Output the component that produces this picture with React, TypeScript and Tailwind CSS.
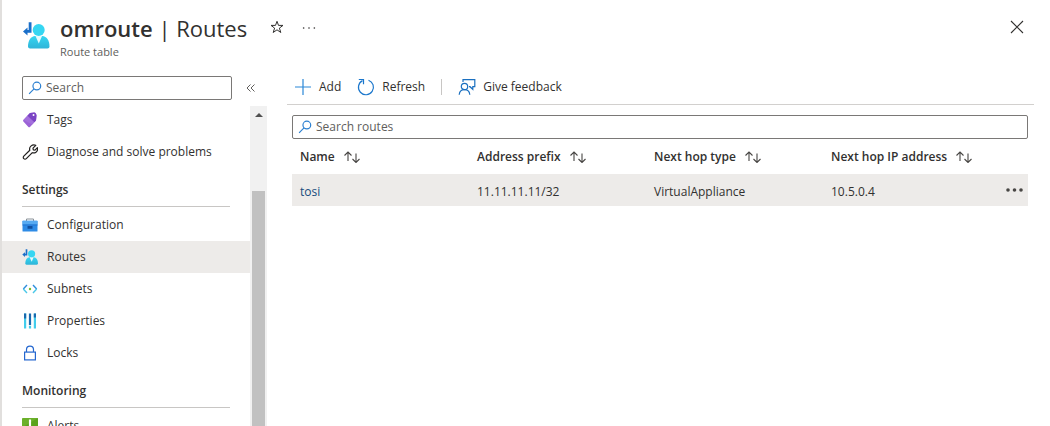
import React from "react";

type IconProps = { className?: string };

function RouteTableIcon({ className }: IconProps) {
  const id = React.useId();
  return (
    <svg viewBox="0 0 27 27" className={className} aria-hidden="true">
      <defs>
        <linearGradient id={id} x1="0" y1="0" x2="0" y2="1">
          <stop offset="0" stopColor="#35d6f2" />
          <stop offset="1" stopColor="#2fb4d8" />
        </linearGradient>
      </defs>
      <path d="M9 .3V10.800H5v2.700L.5 9.400 5 5.500v2.400h1.200V.3z" fill="#1a6fc9" />
      <path d="M5.500 24.500C5.500 18 8.500 14.500 12.500 14H20c4 .5 7 4 7 10.500 0 1.200-1 2-2 2H7.500c-1 0-2-.8-2-2z" fill={`url(#${id})`} />
      <path d="M13 14h6.600l-3.300 7.500z" fill="#e6fafd" />
      <circle cx="16.200" cy="8" r="6" fill="#35d6f2" />
    </svg>
  );
}

function SearchIcon({ className }: IconProps) {
  return (
    <svg viewBox="0 0 13 13" className={className} fill="none" stroke="#2b7fd0" strokeWidth="1.100" aria-hidden="true">
      <circle cx="8.200" cy="4.700" r="3.600" />
      <path d="M5.600 7.300 1 11.900" />
    </svg>
  );
}

function StarIcon() {
  return (
    <svg viewBox="0 0 14 14" className="size-3.5" fill="none" stroke="#323130" strokeWidth="1" aria-hidden="true">
      <path d="M7 1.300 8.500 5.400H13L9.400 8.100l1.400 4.400L7 9.800l-3.800 2.700L4.600 8.100 1 5.400h4.500z" />
    </svg>
  );
}

function CloseIcon() {
  return (
    <svg viewBox="0 0 14 14" className="size-3.5" stroke="#323130" strokeWidth="1.100" aria-hidden="true">
      <path d="m1 1 12 12M13 1 1 13" />
    </svg>
  );
}

function CollapseIcon() {
  return (
    <svg viewBox="0 0 10 10" className="size-2.5" fill="none" stroke="#605e5c" aria-hidden="true">
      <path d="M4.500 1.500 1 5l3.500 3.500M8.500 1.500 5 5l3.500 3.500" />
    </svg>
  );
}

function TagIcon() {
  return (
    <svg viewBox="0 0 15 15" className="size-4" aria-hidden="true">
      <path d="M7.500 1 11.500 .5c.5 0 .9.2 1.100.5l.9 1.500c.2.300.2.600.2.900l-.5 4c0 .4-.2.700-.5 1L7.500 14c-.5.500-1 .5-1.500 0L1.300 9c-.5-.5-.5-1 0-1.500z" fill="#9b62d6" />
      <path d="M7.500 1 11.500 .5c.5 0 .9.2 1.100.5l.9 1.500-.3 4.900c0 .4-.2.700-.5 1L11.500 9.500 5 3.500z" fill="#7b44c4" />
      <path d="M1.300 7.500 5 3.500l6.500 6L9.500 11.800z" fill="#a36fdc" />
      <circle cx="10.800" cy="2.800" r=".9" fill="#fff" />
    </svg>
  );
}

function WrenchIcon() {
  return (
    <svg viewBox="0 0 16 16" className="size-4" fill="none" stroke="#201f1e" strokeWidth="1.200" strokeLinejoin="round" aria-hidden="true">
      <path d="M13.800 1.300 11 4.100l.3 1.700 1.700.3 2.400-2.500c.5 2-.2 3.900-1.700 4.800-1.200.7-2.300.7-3.400.3l-6 6c-.7.700-1.800.7-2.500 0s-.7-1.800 0-2.500l6-5.900c-.5-1.600 0-3.200 1.100-4.200 1.300-1.100 3.200-1.400 4.900-.8z" />
    </svg>
  );
}

function ToolboxIcon() {
  return (
    <svg viewBox="0 0 15 14" className="h-3.5 w-4" aria-hidden="true">
      <path d="M4 3V1h7v2" fill="none" stroke="#8a9299" strokeWidth="1" />
      <rect y="2.800" width="15" height="10.700" rx=".6" fill="#2e8be6" />
      <rect y="2.800" width="15" height="3.700" fill="#56aaf2" />
      <rect y="6.500" width="15" height="1" fill="#2374cf" />
      <rect x="5" y="8" width="5" height="2.800" rx=".5" fill="#124f9e" />
    </svg>
  );
}

function SubnetIcon() {
  return (
    <svg viewBox="0 0 16 12" className="h-3 w-4" fill="none" aria-hidden="true">
      <path d="M5 2 1.300 6M11 2l3.700 4" stroke="#2f8fdc" strokeWidth="1.400" />
      <path d="M1.300 6 5 10M14.700 6 11 10" stroke="#4cc8e8" strokeWidth="1.400" />
      <circle cx="8" cy="6" r="1.200" fill="#76bc2d" />
    </svg>
  );
}

function PropertiesIcon() {
  return (
    <svg viewBox="0 0 12 15" className="h-4 w-3" aria-hidden="true">
      <path d="M0 0h2.200v15H0zM9.800 0H12v15H9.800zM4.900 12.300h2.200V15H4.900z" fill="#43cdec" />
      <path d="M0 0h2.200v5H0zM4.900 0h2.200v11.500H4.900zM9.800 0H12v4H9.800z" fill="#1a69ae" />
    </svg>
  );
}

function LockIcon() {
  return (
    <svg viewBox="0 0 12 15" className="h-4 w-3" fill="none" stroke="#2467cf" strokeWidth="1.200" aria-hidden="true">
      <rect x=".6" y="6.600" width="10.800" height="7.800" />
      <path d="M2.500 6.500V4.100a3.500 3.500 0 0 1 7 0v2.400" />
    </svg>
  );
}

function AlertIcon() {
  return (
    <svg viewBox="0 0 15 15" className="size-4" aria-hidden="true">
      <rect width="15" height="15" rx=".7" fill="#6bb02a" />
      <path d="M0 15V9L15 0v14.300c0 .5-.3.700-.7.700z" fill="#5aa31c" />
      <path d="M6.500 1.500h2v6h-2zM6.500 10h2v2h-2z" fill="#fff" />
    </svg>
  );
}

function PlusIcon() {
  return (
    <svg viewBox="0 0 16 16" className="size-4" stroke="#2b88d8" strokeWidth="1.200" aria-hidden="true">
      <path d="M8 0v16M0 8h16" />
    </svg>
  );
}

function RefreshIcon() {
  return (
    <svg viewBox="0 0 18 18" className="size-4.5" fill="none" stroke="#1b77cc" strokeWidth="1.200" aria-hidden="true">
      <path d="M11.500 2.200a7.500 7.500 0 1 1-6 .4" />
      <path d="M1.800 1.500h4.700v4.700" />
    </svg>
  );
}

function FeedbackIcon() {
  return (
    <svg viewBox="0 0 17 16" className="h-4 w-4.5" fill="none" stroke="#1b70c0" strokeWidth="1.200" aria-hidden="true">
      <circle cx="6" cy="7.500" r="3.200" />
      <path d="M.7 15.700c.3-3 2.500-5 5.300-5s5 2 5.300 5M4.500 3V.7h11.800v7h-2v2.600L11.500 7.700H10.500" />
    </svg>
  );
}

function SortIcon() {
  return (
    <svg viewBox="0 0 17 12" className="h-3 w-4.5" fill="none" stroke="#484644" strokeWidth="1.100" aria-hidden="true">
      <path d="M4.500 10V1M1 4.500 4.500 1 8 4.500M12.500 2.500v9M9 8l3.500 3.500L16 8" />
    </svg>
  );
}

function DotsIcon({ className, radius = 1.8 }: IconProps & { radius?: number }) {
  return (
    <svg viewBox="0 0 17 4" className={className} fill="currentColor" aria-hidden="true">
      <circle cx="2" cy="2" r={radius} />
      <circle cx="8.500" cy="2" r={radius} />
      <circle cx="15" cy="2" r={radius} />
    </svg>
  );
}

function NavItem({ icon, label, active }: { icon: React.ReactNode; label: string; active?: boolean }) {
  return (
    <li>
      <a
        href="#"
        aria-current={active ? "page" : undefined}
        className={`flex h-8 items-center gap-[9px] pl-5 ${active ? "bg-[#edebe9]" : "hover:bg-[#f3f2f1]"}`}
      >
        <span className="flex w-4 shrink-0 justify-center">{icon}</span>
        {label}
      </a>
    </li>
  );
}

function NavHeading({ children }: { children: React.ReactNode }) {
  return (
    <h2 className="mr-5 mb-0.5 ml-5 flex h-[39px] items-center border-b border-[#c8c6c4] pt-1.5 font-semibold">
      {children}
    </h2>
  );
}

const columns = ["Name", "Address prefix", "Next hop type", "Next hop IP address"];
const routes = [{ name: "tosi", prefix: "11.11.11.11/32", type: "VirtualAppliance", ip: "10.5.0.4" }];

export default function App() {
  return (
    <div className="flex h-screen flex-col overflow-hidden border-l-2 border-[#e1dfdd] bg-white font-['Open_Sans','Noto_Sans',sans-serif] text-[12px] text-[#323130]">
      <header className="flex h-[66px] shrink-0 items-start pt-3 pr-5 pl-5">
        <RouteTableIcon className="mt-2.5 size-7 pb-px" />
        <div className="ml-2.5">
          <h1 className="text-[22px] leading-8 whitespace-nowrap">
            <span className="font-semibold">omroute</span> | Routes
          </h1>
          <p className="text-[11px] leading-4 text-[#605e5c]">Route table</p>
        </div>
        <button type="button" aria-label="Add to favorites" className="mt-2 ml-[23px]">
          <StarIcon />
        </button>
        <button type="button" aria-label="More" className="mt-3.5 ml-[18px]">
          <DotsIcon className="h-1 w-3.5" radius={1} />
        </button>
        <button type="button" aria-label="Close" className="mt-2 ml-auto pr-1.5">
          <CloseIcon />
        </button>
      </header>

      <div className="flex min-h-0 flex-1">
        <aside className="flex w-[265px] shrink-0 flex-col pt-2.5">
          <div className="flex shrink-0 items-center pl-5">
            <label className="flex h-6 w-[210px] items-center gap-1 rounded-[2px] border border-[#7a7876] px-[5px]">
              <SearchIcon className="size-3.5 shrink-0" />
              <input
                type="text"
                aria-label="Search menu"
                placeholder="Search"
                className="w-full min-w-0 bg-transparent outline-none placeholder:text-[#605e5c]"
              />
            </label>
            <button type="button" aria-label="Collapse menu" className="ml-3.5">
              <CollapseIcon />
            </button>
          </div>

          <div className="mt-1 flex min-h-0 flex-1">
            <nav className="min-w-0 flex-1 overflow-hidden">
              <ul>
                <NavItem icon={<TagIcon />} label="Tags" />
                <NavItem icon={<WrenchIcon />} label="Diagnose and solve problems" />
              </ul>
              <NavHeading>Settings</NavHeading>
              <ul>
                <NavItem icon={<ToolboxIcon />} label="Configuration" />
                <NavItem icon={<RouteTableIcon className="size-4" />} label="Routes" active />
                <NavItem icon={<SubnetIcon />} label="Subnets" />
                <NavItem icon={<PropertiesIcon />} label="Properties" />
                <NavItem icon={<LockIcon />} label="Locks" />
              </ul>
              <NavHeading>Monitoring</NavHeading>
              <ul>
                <NavItem icon={<AlertIcon />} label="Alerts" />
              </ul>
            </nav>
            <div className="mt-0.5 flex w-[17px] shrink-0 flex-col items-center bg-[#f1f1f1] pt-[7px]">
              <svg viewBox="0 0 8 4" className="h-1 w-2 shrink-0" aria-hidden="true">
                <path d="M4 0 8 4H0z" fill="#505050" />
              </svg>
              <div className="mt-[74px] w-[13px] flex-1 bg-[#c1c1c1]" />
            </div>
          </div>
        </aside>

        <main className="min-w-0 flex-1 pr-4 pl-5">
          <div className="flex h-[39px] items-center border-b border-[#d2d0ce] pt-1 pl-2">
            <button type="button" className="flex items-center gap-2">
              <PlusIcon />
              Add
            </button>
            <button type="button" className="ml-4 flex items-center gap-[7px]">
              <RefreshIcon />
              Refresh
            </button>
            <span className="ml-4 h-4 w-px bg-[#c8c6c4]" />
            <button type="button" className="ml-4 flex items-center gap-[7px]">
              <FeedbackIcon />
              Give feedback
            </button>
          </div>

          <div className="mt-2.5 mr-1.5 ml-[5px]">
            <label className="flex h-6 items-center gap-1 rounded-[2px] border border-[#7a7876] px-[5px]">
              <SearchIcon className="size-3.5 shrink-0" />
              <input
                type="text"
                aria-label="Search routes"
                placeholder="Search routes"
                className="w-full min-w-0 bg-transparent outline-none placeholder:text-[#605e5c]"
              />
            </label>
            <table className="w-full table-fixed text-left">
              <thead>
                <tr className="h-[35px]">
                  {columns.map((c) => (
                    <th key={c} scope="col" className="pl-2 font-semibold whitespace-nowrap">
                      <button type="button" className="flex items-center gap-2">
                        {c}
                        <SortIcon />
                      </button>
                    </th>
                  ))}
                  <th className="w-7" aria-label="Actions" />
                </tr>
              </thead>
              <tbody>
                {routes.map((r) => (
                  <tr key={r.name} className="h-8 bg-[#edebe9]">
                    <td className="pt-1 pl-2">
                      <a href="#" className="text-[#164b7c] hover:underline">
                        {r.name}
                      </a>
                    </td>
                    <td className="pt-1 pl-2">{r.prefix}</td>
                    <td className="pt-1 pl-2">{r.type}</td>
                    <td className="pt-1 pl-2">{r.ip}</td>
                    <td>
                      <button type="button" aria-label="Row actions" className="flex w-full justify-center text-[#484644]">
                        <DotsIcon className="h-1 w-[17px]" />
                      </button>
                    </td>
                  </tr>
                ))}
              </tbody>
            </table>
          </div>
        </main>
      </div>
    </div>
  );
}
